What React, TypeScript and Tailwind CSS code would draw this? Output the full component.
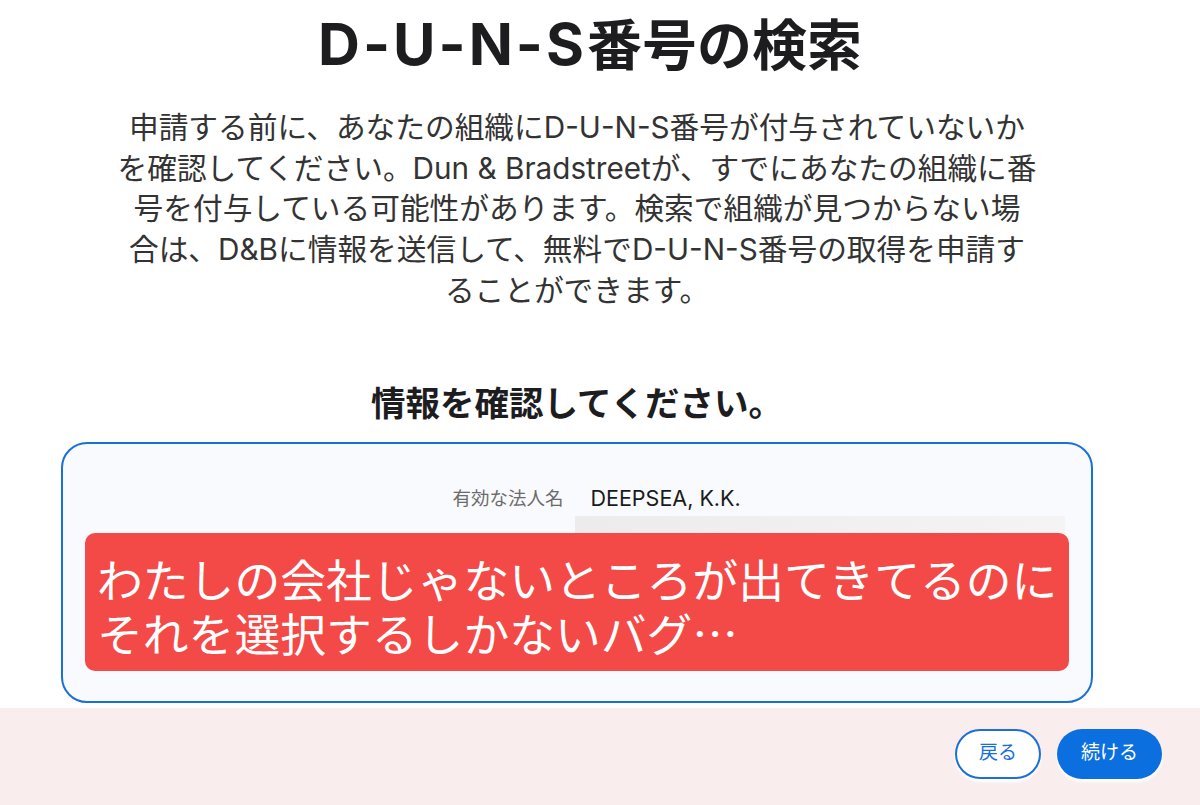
import React from 'react';

const font = { fontFamily: 'Inter, "Noto Sans CJK JP", sans-serif' };
const cjk = { fontFamily: '"Noto Sans CJK JP", sans-serif' };

export default function App() {
  return (
    <div className="w-[1200px] h-[805px] bg-white flex flex-col overflow-hidden text-[#1d1d1f]" style={font}>
      {/* Main column */}
      <div className="w-[1032px] ml-[61px] flex flex-col items-center">
        <h1 className="mt-[11px] pl-[26px] text-[55px] leading-[66px] font-bold text-[#1d1d1f]">
          <span className="text-[58px] tracking-[3px]">D-U-N-S</span>番号の検索
        </h1>

        <p className="mt-[29px] text-[29.7px] leading-[40.7px] text-center text-[#333]">
          申請する前に、あなたの組織にD-U-N-S番号が付与されていないか
          <br />
          を確認してください。Dun &amp; Bradstreetが、すでにあなたの組織に番
          <br />
          号を付与している可能性があります。検索で組織が見つからない場
          <br />
          合は、D&amp;Bに情報を送信して、無料でD-U-N-S番号の取得を申請す
          <br />
          ることができます。
        </p>

        <h2 className="mt-[70px] text-[34.5px] leading-[46px] font-bold text-[#1d1d1f]">
          情報を確認してください。
        </h2>

        {/* Confirmation card */}
        <div className="mt-[15px] w-full rounded-[26px] border-2 border-[#1a6fd8] bg-[#f9fafd] pt-[40px] pb-[30px] px-[22px]">
          <div className="grid grid-cols-2 gap-x-[27px] items-center">
            <div className="text-right text-[18.5px] leading-[28px] text-[#6b6b6b]">有効な法人名</div>
            <div className="text-[21.5px] leading-[28px] text-[#1a1a1a]">DEEPSEA, K.K.</div>
          </div>
          <div className="grid grid-cols-2 mt-[4px]">
            <div />
            <div className="h-[17px] mr-[4px] -ml-[2px] bg-gradient-to-r from-[#ececec] via-[#f0f0f0] to-[#f4f4f5]" />
          </div>

          {/* Annotation */}
          <div
            className="rounded-[10px] bg-[#f44a47] pl-[12px] pt-[18px] pb-[12px] text-white text-[45.8px] leading-[54px] whitespace-nowrap"
            style={cjk}
          >
            <div>わたしの会社じゃないところが出てきてるのに</div>
            <div>それを選択するしかないバグ…</div>
          </div>
        </div>
      </div>

      {/* Footer */}
      <div className="mt-[5px] flex-1 bg-[#f9eded] flex justify-end items-start pt-[21px] pr-[38px] gap-[16px]">
        <button className="h-[50px] w-[86px] rounded-full border-2 border-[#1a6fd8] bg-white text-[#1a6fd8] text-[19px] shadow-[0_3px_3px_#ffffff]">
          戻る
        </button>
        <button className="h-[50px] w-[105px] rounded-full bg-[#0b6fe0] text-white text-[19px] shadow-[0_3px_3px_#ffffff]">
          続ける
        </button>
      </div>
    </div>
  );
}
